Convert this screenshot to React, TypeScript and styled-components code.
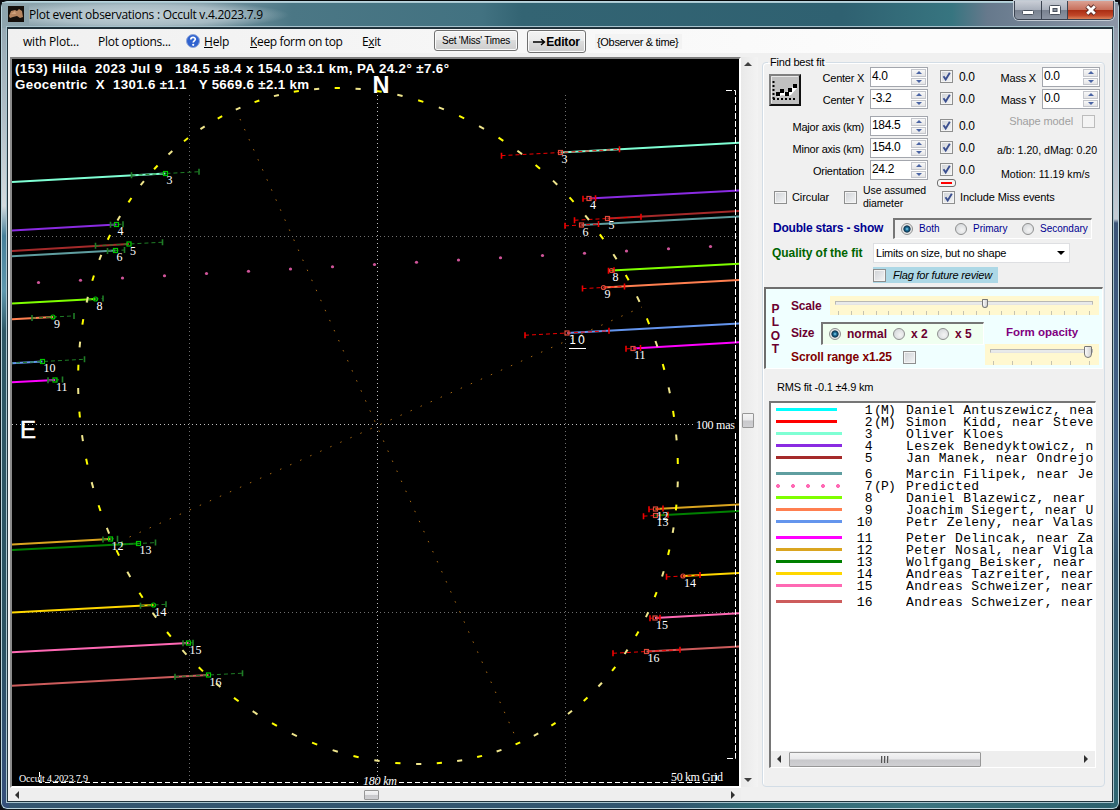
import { Fragment } from 'react';
import styled, { createGlobalStyle, css } from 'styled-components';

const GlobalStyle = createGlobalStyle`
  * {
    box-sizing: border-box;
  }

  body {
    margin: 0;
    background: #0b0b10;
    font-family: 'Liberation Sans', Arial, sans-serif;
    font-size: 11px;
    color: #000;
    overflow: hidden;
  }
`;

/* ---------- window ---------- */

const Window = styled.div`
  width: 1120px;
  height: 810px;
  padding: 1px 7px 8px 7px;
  display: flex;
  flex-direction: column;
  border: 1px solid #10181c;
  border-top-color: #05080a;
  border-radius: 7px;
  background:
    linear-gradient(180deg, #8fa3ae 0, #b3c0c8 120px, #d4dade 205px, #47809a 235px, #5f98ae 290px, #2f5866 330px, #2a5262 640px, #35507a 790px) left / 8px 100% no-repeat,
    linear-gradient(180deg, #8a93a5 0, #a4acb8 90px, #c5ccd4 218px, #3c5578 222px, #44658a 480px, #33566e 560px, #2f6672 100%) right / 8px 100% no-repeat,
    linear-gradient(90deg, #34556f 0, #31556f 60%, #2f6672 66%, #3c7480 82%, #2c5f6c 100%) bottom / 100% 9px no-repeat,
    #35606e;
  box-shadow: inset 0 0 0 1px #b9d3dc;
`;

const TitleBar = styled.div`
  height: 26px;
  flex: none;
  margin: 0 -6px;
  padding-left: 6px;
  display: flex;
  align-items: flex-start;
  background: linear-gradient(90deg, #8ea5ae 0, #7d99a4 200px, #4b7785 290px, #427281 480px, #336473 520px, #2f6171 840px, #377580 950px, #66798c 985px, #8b95a6 1110px);
  border-top: 1px solid #a9c8d1;
`;

const TitleIcon = styled.svg`
  margin: 3px 5px 0 0;
  width: 16px;
  height: 16px;
`;

const Title = styled.div`
  font: 12px 'Open Sans', 'Noto Sans', sans-serif;
  letter-spacing: -0.27px;
  line-height: 24px;
  height: 24px;
  padding-right: 8px;
  flex: 1;
  background: radial-gradient(ellipse 150px 15px at 110px 12px, rgba(215, 226, 231, 0.75) 0, rgba(195, 210, 217, 0.6) 65%, transparent 100%);
`;

const CaptionButtons = styled.div`
  display: flex;
  height: 19px;
  margin: -2px 4px 0 0;
  border: 1px solid #3a4350;
  border-top: 0;
  border-radius: 0 0 5px 5px;
  overflow: hidden;
  box-shadow: 0 0 0 1px #c3cbd4;
`;

const CaptionButton = styled.div<{ $w: number; $close?: boolean }>`
  width: ${({ $w }) => $w}px;
  display: flex;
  align-items: center;
  justify-content: center;
  border-right: ${({ $close }) => ($close ? 0 : '1px solid #3a4350')};
  background: ${({ $close }) =>
    $close
      ? 'linear-gradient(#dba193 0, #c8705c 48%, #a82c12 50%, #c04628 80%, #d98259 100%)'
      : 'linear-gradient(#c9ced6 0, #a9b0bc 48%, #78818f 50%, #8c95a3 100%)'};
`;

const Client = styled.div`
  flex: 1;
  display: flex;
  flex-direction: column;
  background: #f0f0f0;
  border-top: 1px solid #1f3039;
  box-shadow: 0 0 0 1px #22343d, 0 0 0 2px #a8c4ce;
`;

/* ---------- menu ---------- */

const MenuBar = styled.div`
  height: 24px;
  flex: none;
  display: flex;
  align-items: center;
  padding-left: 15px;
  background: linear-gradient(90deg, #f0f0f0 0, #f6f6f6 40%, #fcfcfc 80%);
  font: 12px 'Open Sans', 'Noto Sans', sans-serif;
`;

const MenuItem = styled.div<{ $w: number; $spacing?: number }>`
  width: ${({ $w }) => $w}px;
  flex: none;
  white-space: nowrap;
  letter-spacing: ${({ $spacing = -0.2 }) => $spacing}px;
`;

const HelpIcon = styled.svg`
  width: 14px;
  height: 14px;
  margin-right: 4px;
`;

const PushButton = styled.div<{ $w: number; $strong?: boolean }>`
  width: ${({ $w }) => $w}px;
  height: ${({ $strong }) => ($strong ? 23 : 21)}px;
  margin: ${({ $strong }) => ($strong ? '1px' : '-1px')} 9px 0 0;
  display: flex;
  align-items: center;
  justify-content: center;
  white-space: nowrap;
  border: 1px solid #707070;
  border-radius: 3px;
  background: linear-gradient(#f3f3f3 0, #ebebeb 49%, #dcdcdc 50%, #cdcdcd 100%);
  box-shadow: inset 0 0 0 1px #fbfbfb;
  font: ${({ $strong }) => ($strong ? 'bold 12px' : '10px')} 'Liberation Sans', Arial, sans-serif;
  letter-spacing: ${({ $strong }) => ($strong ? -0.2 : -0.22)}px;
`;

const Hint = styled.div`
  padding: 2px 4px 0 2px;
  background: #f3f3f3;
  font: 11px/13px 'Liberation Sans', Arial, sans-serif;
  letter-spacing: -0.32px;
`;

/* ---------- plot ---------- */

const Main = styled.div`
  flex: 1;
  display: flex;
  padding: 4px 0 0 2px;
`;

const PlotColumn = styled.div`
  width: 731px;
  flex: none;
`;

const PlotFrame = styled.div`
  border: 2px solid #fff;
  border-top-color: #7c7c7c;
  border-left-color: #8a8a8a;
  height: 731px;
`;

const Plot = styled.svg`
  display: block;
  width: 727px;
  height: 727px;
  background: #000;
`;

const ScrollH = styled.div<{ $h: number }>`
  height: ${({ $h }) => $h}px;
  display: flex;
  align-items: center;
  background: #eeeeee;
`;

const ScrollV = styled.div`
  width: 17px;
  height: 730px;
  flex: none;
  display: flex;
  flex-direction: column;
  align-items: center;
  padding: 5px 4px 5px 0;
  background: linear-gradient(90deg, #e9e9e9, #f3f3f3);
`;

const Spacer = styled.div<{ $size: number }>`
  flex: 0 0 ${({ $size }) => $size}px;
`;

const Thumb = styled.div<{ $w: number; $h: number }>`
  width: ${({ $w }) => $w}px;
  height: ${({ $h }) => $h}px;
  flex: none;
  display: flex;
  align-items: center;
  justify-content: center;
  gap: 1px;
  border: 1px solid #979797;
  border-radius: 1px;
  background: linear-gradient(#f4f4f4 0, #e9e9eb 48%, #c8c8cb 52%, #d0d0d3 100%);
`;

const Grip = styled.i`
  width: 2px;
  height: 7px;
  border-left: 1px solid #555;
  border-right: 1px solid #bbb;
`;

const Arrow = styled.i<{ $dir: 'up' | 'down' | 'left' | 'right' }>`
  flex: none;
  width: 0;
  height: 0;
  border: 4px solid transparent;
  ${({ $dir }) => $dir === 'up' && css`border-top: 0; border-bottom-color: #404040;`}
  ${({ $dir }) => $dir === 'down' && css`border-bottom: 0; border-top-color: #404040;`}
  ${({ $dir }) => $dir === 'left' && css`border-left: 0; border-right-color: #303030;`}
  ${({ $dir }) => $dir === 'right' && css`border-right: 0; border-left-color: #303030;`}
`;

/* ---------- side panel ---------- */

const Side = styled.fieldset`
  margin: 0 0 0 4px;
  padding: 0;
  width: 343px;
  height: 730px;
  min-width: 0;
  border: 1px solid #d3dde6;
  border-radius: 4px;
  box-shadow: inset 1px 1px 0 #fff;
`;

const Legend = styled.legend`
  margin-left: 5px;
  padding: 0 2px;
  height: 11px;
  line-height: 11px;
  letter-spacing: -0.2px;
`;

const FitGrid = styled.div`
  height: 116px;
  margin-top: -1px;
  padding-left: 7px;
  display: grid;
  grid-template-columns: 32px 62px 6px 58px 12px 13px 6px 20px 129px;
  grid-template-rows: 22px 27px 22px 22px 22px;
`;

const FitButton = styled.svg`
  grid-row: 1 / 3;
  grid-column: 1;
  width: 32px;
  height: 32px;
  margin: 7px 0 0 -1px;
`;

const FitLabel = styled.div`
  grid-column: 1 / 3;
  justify-self: end;
  white-space: nowrap;
  line-height: 23px;
  height: 20px;
  letter-spacing: -0.25px;
`;

const SpinBox = styled.div`
  width: 58px;
  height: 20px;
  display: flex;
  justify-content: space-between;
  padding: 0 0 0 1px;
  border: 1px solid #a3a6ad;
  background: #fff;
  font-size: 12px;
  line-height: 16px;
  letter-spacing: -0.35px;
`;

const SpinArrows = styled.div`
  width: 15px;
  margin: 1px;
  display: flex;
  flex-direction: column;
  gap: 1px;
`;

const SpinArrow = styled.div<{ $up?: boolean }>`
  flex: 1;
  display: flex;
  align-items: center;
  justify-content: center;
  border: 1px solid #c4c6cc;
  background: linear-gradient(#f8f8f8, #e4e4e6);

  &::after {
    content: '';
    border: 3px solid transparent;
    ${({ $up }) =>
      $up ? 'border-top: 0; border-bottom-color: #4a64a4;' : 'border-bottom: 0; border-top-color: #4a64a4;'}
  }
`;

const CheckFrame = styled.span<{ $dim?: boolean }>`
  width: 13px;
  height: 13px;
  flex: none;
  display: inline-flex;
  border: 1px solid ${({ $dim }) => ($dim ? '#bcbcbc' : '#8e8f8f')};
  background: ${({ $dim }) => ($dim ? '#f4f4f4' : 'linear-gradient(135deg, #cfd2d6, #f4f5f6)')};
  box-shadow: inset 0 0 0 1px #f4f4f4;
`;

const CheckCell = styled.div`
  grid-column: 6;
  padding-top: 3px;
  line-height: 0;
`;

const CheckValue = styled.div`
  grid-column: 8;
  font-size: 12px;
  line-height: 20px;
  letter-spacing: -0.4px;
`;

const MassCell = styled.div`
  grid-column: 9;
  display: flex;
  gap: 6px;
  justify-content: flex-end;
  padding-right: 8px;
  white-space: nowrap;
  line-height: 23px;
  letter-spacing: -0.2px;
`;

const ShapeModel = styled.div`
  grid-column: 9;
  display: flex;
  gap: 9px;
  justify-content: flex-end;
  padding-right: 13px;
  white-space: nowrap;
  letter-spacing: -0.1px;
  line-height: 12px;
  color: #a0a0a0;
  margin-top: -1px;
`;

const FitNote = styled.div<{ $indent: number; $drop: number }>`
  grid-column: 9;
  white-space: nowrap;
  font-size: 10.6px;
  padding-left: ${({ $indent }) => $indent}px;
  padding-top: ${({ $drop }) => $drop}px;
`;

const MissBadge = styled.div`
  width: 19px;
  height: 8px;
  margin: -4px 0 0 174px;
  padding: 2px 3px;
  border: 1px solid #707070;
  border-radius: 3px;
  background: #f4f4f4;

  &::after {
    content: '';
    display: block;
    height: 2px;
    background: #f00;
  }
`;

const OptionRow = styled.div`
  height: 26px;
  margin-top: -3px;
  padding-left: 11px;
  display: flex;
  align-items: center;
`;

const OptionText = styled.div<{ $w: number }>`
  width: ${({ $w }) => $w}px;
  padding-left: 5px;
  white-space: pre;
  line-height: 13px;
  letter-spacing: -0.1px;
`;

const SmallOption = styled(OptionText)`
  padding-left: 6px;
  font-size: 10.5px;
`;

const StarsRow = styled.div`
  height: 20px;
  margin-top: 8px;
  padding-left: 10px;
  display: flex;
  align-items: center;
`;

const StrongLabel = styled.div<{ $w: number; $color: string; $spacing?: number }>`
  width: ${({ $w }) => $w}px;
  flex: none;
  white-space: nowrap;
  font-size: 12px;
  font-weight: bold;
  color: ${({ $color }) => $color};
  letter-spacing: ${({ $spacing = -0.2 }) => $spacing}px;
`;

const RadioPanel = styled.div<{ $w: number; $h: number; $fill: string }>`
  width: ${({ $w }) => $w}px;
  height: ${({ $h }) => $h}px;
  flex: none;
  display: flex;
  align-items: center;
  padding-left: 6px;
  border: 2px solid #fff;
  border-width: 2px 1px 1px 2px;
  border-top-color: #767676;
  border-left-color: #767676;
  background: ${({ $fill }) => $fill};
`;

const RadioDot = styled.i<{ $on?: boolean }>`
  width: 12px;
  height: 12px;
  flex: none;
  border: 1px solid #8e8f8f;
  border-radius: 50%;
  background: ${({ $on }) =>
    $on
      ? 'radial-gradient(circle at 5px 5px, #8fdcf5 0, #1f6f99 1.6px, #0c3049 3.2px, #e8e8e8 4px)'
      : 'radial-gradient(circle at 6px 6px, #f4f4f4 0, #d5d8db 80%)'};
`;

const RadioText = styled.span<{ $w: number; $strong?: boolean }>`
  width: ${({ $w }) => $w}px;
  flex: none;
  padding-left: 6px;
  white-space: nowrap;
  font-size: ${({ $strong }) => ($strong ? 12 : 10)}px;
  font-weight: ${({ $strong }) => ($strong ? 'bold' : 'normal')};
  color: ${({ $strong }) => ($strong ? '#6b0030' : '#000090')};
`;

const QualityRow = styled.div`
  height: 20px;
  margin-top: 5px;
  padding-left: 9px;
  display: flex;
  align-items: center;
`;

const Combo = styled.div`
  width: 197px;
  height: 20px;
  display: flex;
  align-items: center;
  justify-content: space-between;
  padding: 0 4px 0 2px;
  border: 1px solid #dedfe2;
  background: #fff;
  letter-spacing: -0.22px;
  white-space: nowrap;

  &::after {
    content: '';
    border: 4px solid transparent;
    border-bottom: 0;
    border-top-color: #000;
  }
`;

const ReviewFlag = styled.div`
  width: 125px;
  height: 16px;
  margin: 4px 0 0 110px;
  display: flex;
  align-items: center;
  gap: 7px;
  background: #add8e6;
  font-style: italic;
  letter-spacing: -0.2px;
  white-space: nowrap;
`;

const PlotPanel = styled.div`
  width: 339px;
  height: 82px;
  margin: 4px 0 0 1px;
  display: flex;
  border: 2px solid #fff;
  border-top-color: #6e6e6e;
  border-left-color: #6e6e6e;
  border-width: 2px 1px 1px 2px;
  background: #f0ffff;
`;

const PlotWord = styled.div`
  width: 25px;
  padding: 14px 8px 0 2px;
  text-align: center;
  font-size: 12px;
  font-weight: bold;
  line-height: 13.3px;
  color: #6b0030;
`;

const PlotSettings = styled.div`
  flex: 1;
`;

const ScaleRow = styled.div`
  height: 19px;
  margin-top: 7px;
  display: flex;
  align-items: center;
`;

const SizeArea = styled.div`
  display: flex;
  padding-top: 6px;
`;

const SizeColumn = styled.div<{ $w: number }>`
  width: ${({ $w }) => $w}px;
  flex: none;
`;

const SizeRow = styled.div`
  display: flex;
  align-items: center;
  height: 24px;
`;

const OpacityTitle = styled.div`
  padding: 5px 0 0 21px;
  height: 23px;
  font-size: 11.5px;
  font-weight: bold;
  color: #800080;
  white-space: nowrap;
`;

const SliderBox = styled.div<{ $w: number; $h: number }>`
  position: relative;
  width: ${({ $w }) => $w}px;
  height: ${({ $h }) => $h}px;
  flex: none;
  padding: 5px 6px 0 5px;
  background: #fff8d0;
`;

const Track = styled.div`
  height: 4px;
  border: 1px solid #b8b8b4;
  border-bottom-color: #e4e4e4;
  background: #e8eaea;
`;

const Ticks = styled.div<{ $gap: number }>`
  display: flex;
  justify-content: space-between;
  padding: 0 3px;
  margin-top: ${({ $gap }) => $gap}px;
`;

const Tick = styled.i`
  width: 1px;
  height: 4px;
  background: #c6c3b0;
`;

const Knob = styled.div<{ $x: number; $big?: boolean }>`
  position: absolute;
  left: ${({ $x }) => $x}px;
  top: ${({ $big }) => ($big ? 2 : 3)}px;
  width: ${({ $big }) => ($big ? 8 : 6)}px;
  height: ${({ $big }) => ($big ? 12 : 9)}px;
  border: 1px solid #777;
  border-radius: 1px 1px 4px 4px;
  background: linear-gradient(90deg, #fafafa, #d2d2d2);
`;

const RmsText = styled.div`
  margin: 11px 0 0 14px;
  height: 14px;
  line-height: 14px;
  letter-spacing: -0.2px;
`;

const ObserverBox = styled.div`
  width: 327px;
  height: 367px;
  margin: 7px 0 0 6px;
  display: flex;
  flex-direction: column;
  overflow: hidden;
  border: 1px solid #fff;
  border-top: 2px solid #767676;
  border-left: 2px solid #767676;
  background: #fff;
`;

const ObserverList = styled.div`
  flex: 1;
  padding: 1px 0 0 5px;
`;

const ObserverRow = styled.div<{ $gap?: boolean }>`
  height: 12px;
  margin-top: ${({ $gap }) => ($gap ? 4 : 0)}px;
  display: grid;
  grid-template-columns: 66px 31px 33px 187px;
  font: 13px/14px 'Liberation Mono', 'Courier New', monospace;
  letter-spacing: 0.36px;
  white-space: pre;
`;

const Swatch = styled.i<{ $w: number; $color: string; $dots?: boolean }>`
  width: ${({ $w }) => $w}px;
  height: ${({ $dots }) => ($dots ? 4 : 3)}px;
  margin-top: 4px;
  background: ${({ $color, $dots }) =>
    $dots ? `radial-gradient(circle at 2px 2px, ${$color} 1.7px, transparent 2.2px) 0 0 / 15px 4px repeat-x` : $color};
`;

const ObserverNo = styled.span`
  text-align: right;
`;

const ObserverKind = styled.span`
  padding-left: 1px;
  letter-spacing: -0.8px;
`;

const ObserverName = styled.span`
  overflow: hidden;
  height: 16px;
`;

/* ---------- data ---------- */

type Chord = {
  no: number;
  color: string;
  // edgeY, x, y, error bar from, error bar to
  d: number[];
  r: number[];
  dot?: boolean;
};

const chords: Chord[] = [
  { no: 3, color: '#7fffd4', d: [182, 165.5, 173.5, 131.5, 199], r: [142.8, 560.5, 152.5, 501.5, 619.5] },
  { no: 4, color: '#8a2be2', d: [230.5, 116.5, 224.5, 110.5, 123], r: [190.5, 589, 198.5, 583, 595.5] },
  { no: 5, color: '#a52a2a', d: [251, 129, 244, 95.5, 162.5], r: [211, 607.5, 218.5, 574.5, 641] },
  { no: 6, color: '#5f9ea0', d: [256.3, 115.5, 250.5, 107.5, 124.5], r: [216.5, 581.5, 225, 565, 598.5] },
  { no: 8, color: '#7fff00', d: [303.5, 95.5, 299, 87.5, 103], r: [263.7, 611.5, 270.5, 608.5, 614], dot: true },
  { no: 9, color: '#ff7f50', d: [319.2, 53, 317, 32, 74], r: [280, 603.5, 287.5, 582.5, 624.5], dot: true },
  { no: 10, color: '#6495ed', d: [363.3, 42.5, 361.5, 2, 84.5], r: [323.5, 567, 333, 525, 609] },
  { no: 11, color: '#ff00ff', d: [382.3, 55, 380, 48, 62.5], r: [342.3, 633, 348.5, 626, 640.5] },
  { no: 12, color: '#daa520', d: [544.5, 110.5, 539, 103, 117.5], r: [504.5, 655.5, 509, 649, 663] },
  { no: 13, color: '#008000', d: [550, 138.5, 543.5, 122, 155.5], r: [511, 655.5, 515.5, 643.5, 668] },
  { no: 14, color: '#ffd700', d: [612.5, 153.5, 605, 140.5, 166], r: [573, 683, 576, 666.5, 700], dot: true },
  { no: 15, color: '#ff69b4', d: [652.2, 188.5, 643, 183, 193], r: [613.2, 655, 618, 650, 660] },
  { no: 16, color: '#cd5c5c', d: [685.8, 208.5, 675, 175, 242.5], r: [646.5, 646.5, 651.5, 613, 680] },
];

const observers = [
  { no: 1, kind: '(M)', name: 'Daniel Antuszewicz, nea', color: '#00ffff', w: 61 },
  { no: 2, kind: '(M)', name: 'Simon  Kidd, near Steve', color: '#ff0000', w: 61 },
  { no: 3, name: 'Oliver Kloes', color: '#7fffd4' },
  { no: 4, name: 'Leszek Benedyktowicz, n', color: '#8a2be2' },
  { no: 5, name: 'Jan Manek, near Ondrejo', color: '#a52a2a' },
  { no: 6, name: 'Marcin Filipek, near Je', color: '#5f9ea0' },
  { no: 7, kind: '(P)', name: 'Predicted', color: '#ff69b4' },
  { no: 8, name: 'Daniel Blazewicz, near', color: '#7fff00' },
  { no: 9, name: 'Joachim Siegert, near U', color: '#ff7f50' },
  { no: 10, name: 'Petr Zeleny, near Valas', color: '#6495ed' },
  { no: 11, name: 'Peter Delincak, near Za', color: '#ff00ff' },
  { no: 12, name: 'Peter Nosal, near Vigla', color: '#daa520' },
  { no: 13, name: 'Wolfgang Beisker, near', color: '#008000' },
  { no: 14, name: 'Andreas Tazreiter, near', color: '#ffd700' },
  { no: 15, name: 'Andreas Schweizer, near', color: '#ff69b4' },
  { no: 16, name: 'Andreas Schweizer, near', color: '#cd5c5c' },
];

const fitRows = [
  { label: 'Center X', value: '4.0' },
  { label: 'Center Y', value: '-3.2' },
  { label: 'Major axis (km)', value: '184.5' },
  { label: 'Minor axis (km)', value: '154.0' },
  { label: 'Orientation', value: '24.2' },
];

const CENTER = { x: 378, y: 426 };
const PA = (24.2 * Math.PI) / 180;
const SEMI_MAJOR = 346.9;
const SEMI_MINOR = 289.5;

const onEllipse = (deg: number) => {
  const t = (deg * Math.PI) / 180;
  const a = SEMI_MAJOR * Math.cos(t);
  const b = SEMI_MINOR * Math.sin(t);
  return {
    x: CENTER.x - a * Math.sin(PA) + b * Math.cos(PA),
    y: CENTER.y - a * Math.cos(PA) - b * Math.sin(PA),
  };
};

const EllipseDashes = () => (
  <g strokeWidth={2}>
    {Array.from({ length: 90 }, (_, i) => {
      const from = onEllipse(i * 4);
      const to = onEllipse(i * 4 + 1);
      return (
        <line key={i} x1={from.x} y1={from.y} x2={to.x} y2={to.y} stroke={i % 2 ? '#ffff00' : '#f0e68c'} />
      );
    })}
  </g>
);

const ErrorBar = ({ side, color }: { side: number[]; color: string }) => {
  const [, x, y, from, to] = side;
  const slope = -0.053;
  const y1 = y + (from - x) * slope;
  const y2 = y + (to - x) * slope;
  return (
    <g stroke={color}>
      <line x1={from} y1={y1} x2={to} y2={y2} strokeDasharray='4 3' />
      <path d={`M${from} ${y1 - 3}v6M${to} ${y2 - 3}v6`} strokeWidth={1.6} />
    </g>
  );
};

const Marker = ({ x, y, color, round }: { x: number; y: number; color: string; round?: boolean }) =>
  round ? (
    <circle cx={x} cy={y} r={2} fill='none' stroke={color} strokeWidth={1.2} />
  ) : (
    <rect x={x - 2} y={y - 2} width={4} height={4} fill='none' stroke={color} strokeWidth={1.2} />
  );

const ChordLines = () => (
  <>
    {chords.map(({ no, color, d, r, dot }) => (
      <Fragment key={no}>
        <line x1={12} y1={d[0]} x2={d[1]} y2={d[2]} stroke={color} strokeWidth={2} />
        <line x1={r[1]} y1={r[2]} x2={740} y2={r[0]} stroke={color} strokeWidth={2} />
        <ErrorBar side={d} color='#1f7d26' />
        <ErrorBar side={r} color='#f00000' />
        <Marker x={d[1]} y={d[2]} color='#00c800' round={dot} />
        <Marker x={r[1]} y={r[2]} color='#e04a3a' round={dot} />
      </Fragment>
    ))}
    <g fill='#fff' fontFamily="'Liberation Serif', serif" fontSize={12}>
      {chords.map(({ no, d, r }) => (
        <Fragment key={no}>
          <text x={d[1] + 1} y={d[2] + 10.5}>{no}</text>
          {no !== 10 && <text x={r[1] + 1} y={r[2] + 10.5}>{no}</text>}
        </Fragment>
      ))}
    </g>
    <text x={569} y={344} fill='#fff' fontFamily="'DejaVu Sans', sans-serif" fontSize={11.5} textLength={16}>10</text>
    <path d='M569 348.5h17' stroke='#fff' />
  </>
);

const OccultationPlot = () => (
  <Plot viewBox='12 59 727 727'>
    <g stroke='#6e6e6e' strokeDasharray='1 3'>
      <path d='M189.5 95V786M565.5 95V786' />
      <path d='M12 236.5H739M12 612.5H739' />
      <path d='M377.5 95V786M12 424.5H694' stroke='#c0c0c0' />
    </g>
    <g stroke='#a86a14' strokeDasharray='1.5 9.5'>
      <path d='M240 119L516 738' />
      <path d='M129.500 537L642 307' />
    </g>
    <ChordLines />
    {Array.from({ length: 17 }, (_, i) => (
      <circle key={i} cx={38.5 + i * 42} cy={282.5 - i * 2.25} r={1.6} fill='#d0559a' />
    ))}
    <EllipseDashes />
    <g stroke='#fff' fill='none'>
      <path d='M726 90.500H735.500V419M735.500 433V758.500H726' strokeDasharray='6 2' />
      <path d='M39.500 772V782.500H358M399 782.500H716.500V772' strokeDasharray='5 3' />
    </g>
    <g fill='#fff' fontFamily="'Liberation Sans', sans-serif" fontWeight='bold'>
      <text x={15} y={73} fontSize={13.3} textLength={434} xmlSpace='preserve' style={{ whiteSpace: 'pre' }}>
        {'(153) Hilda  2023 Jul 9   184.5 ±8.4 x 154.0 ±3.1 km, PA 24.2° ±7.6°'}
      </text>
      <text x={15} y={89} fontSize={13.3} textLength={294} xmlSpace='preserve' style={{ whiteSpace: 'pre' }}>
        {'Geocentric  X  1301.6 ±1.1   Y 5669.6 ±2.1 km'}
      </text>
      <text x={372.500} y={93} fontSize={23.500} textLength={17}>N</text>
      <text x={20} y={438} fontSize={24} fontWeight='normal' stroke='#fff' strokeWidth={0.5}>E</text>
    </g>
    <g fill='#fff' fontFamily="'Liberation Serif', serif">
      <text x={696} y={429} fontSize={12} textLength={39}>100 mas</text>
      <text x={363} y={785} fontSize={12} fontStyle='italic' textLength={34}>180 km</text>
      <text x={19} y={782} fontSize={10} textLength={69}>Occult 4.2023.7.9</text>
      <text x={671} y={781} fontSize={12} textLength={52}>50 km Grid</text>
    </g>
  </Plot>
);

const Check = ({ on, dim }: { on?: boolean; dim?: boolean }) => (
  <CheckFrame $dim={dim}>
    {on && (
      <svg width='11' height='11' viewBox='0 0 11 11'>
        <path d='M2.500 5.200L4.700 8.500L8.800 1.800' fill='none' stroke='#3b4f8f' strokeWidth='1.9' />
      </svg>
    )}
  </CheckFrame>
);

const Spin = ({ value }: { value: string }) => (
  <SpinBox>
    {value}
    <SpinArrows>
      <SpinArrow $up />
      <SpinArrow />
    </SpinArrows>
  </SpinBox>
);

const Slider = ({ w, h, ticks, knob, big }: { w: number; h: number; ticks: number; knob: number; big?: boolean }) => (
  <SliderBox $w={w} $h={h}>
    <Track />
    <Ticks $gap={big ? 8 : 6}>
      {Array.from({ length: ticks }, (_, i) => (
        <Tick key={i} />
      ))}
    </Ticks>
    <Knob $x={knob} $big={big} />
  </SliderBox>
);

const FitIcon = () => (
  <FitButton viewBox='0 0 32 32'>
    <rect width='32' height='32' fill='#808080' />
    <path d='M32 0V32H0L2 30H30V2z' fill='#111' />
    <rect x='2' y='2' width='28' height='28' fill='#c0c0c0' />
    <path d='M2.500 29V2.500H29' fill='none' stroke='#e8e8e8' />
    <path d='M8 21L13 17L17 19L21 15L26 11H28V14L22 21L18 22L13 21L9 23z' fill='#fff' />
    <path d='M4.500 7V26' stroke='#000' strokeWidth='2' strokeDasharray='2 2' />
    <path d='M4 25H28' stroke='#000' strokeWidth='2' strokeDasharray='2 2' />
    <path d='M7 18h4v4h-4zM11 15h4v4h-4zM16 18h4v4h-4zM19 14h4v4h-4zM24 10h4v4h-4z' fill='#000' />
  </FitButton>
);

const PlotControls = () => (
  <PlotPanel>
    <PlotWord>
      P<br />L<br />O<br />T
    </PlotWord>
    <PlotSettings>
      <ScaleRow>
        <StrongLabel $w={39} $color='#6b0030'>Scale</StrongLabel>
        <Slider w={269} h={19} ticks={21} knob={152} />
      </ScaleRow>
      <SizeArea>
        <SizeColumn $w={194}>
          <SizeRow>
            <StrongLabel $w={30} $color='#6b0030'>Size</StrongLabel>
            <RadioPanel $w={163} $h={23} $fill='#f0fff0'>
              <RadioDot $on />
              <RadioText $w={52} $strong>normal</RadioText>
              <RadioDot />
              <RadioText $w={32} $strong>x 2</RadioText>
              <RadioDot />
              <RadioText $w={30} $strong>x 5</RadioText>
            </RadioPanel>
          </SizeRow>
          <SizeRow>
            <StrongLabel $w={112} $color='#800000' $spacing={-0.1}>Scroll range x1.25</StrongLabel>
            <Check />
          </SizeRow>
        </SizeColumn>
        <SizeColumn $w={115}>
          <OpacityTitle>Form opacity</OpacityTitle>
          <Slider w={114} h={21} ticks={6} knob={99} big />
        </SizeColumn>
      </SizeArea>
    </PlotSettings>
  </PlotPanel>
);

const FitPanel = () => (
  <Side>
    <Legend>Find best fit</Legend>
    <FitGrid>
      <FitIcon />
      {fitRows.map(({ label, value }, i) => (
        <Fragment key={label}>
          <FitLabel style={{ gridRow: i + 1 }}>{label}</FitLabel>
          <div style={{ gridRow: i + 1, gridColumn: 4 }}>
            <Spin value={value} />
          </div>
          <CheckCell style={{ gridRow: i + 1 }}>
            <Check on />
          </CheckCell>
          <CheckValue style={{ gridRow: i + 1 }}>0.0</CheckValue>
        </Fragment>
      ))}
      <MassCell style={{ gridRow: 1 }}>Mass X<Spin value='0.0' /></MassCell>
      <MassCell style={{ gridRow: 2 }}>Mass Y<Spin value='0.0' /></MassCell>
      <ShapeModel style={{ gridRow: 3 }}>Shape model<Check dim /></ShapeModel>
      <FitNote style={{ gridRow: 4 }} $indent={18} $drop={6}>a/b: 1.20, dMag: 0.20</FitNote>
      <FitNote style={{ gridRow: 5 }} $indent={22} $drop={8}>Motion: 11.19 km/s</FitNote>
    </FitGrid>
    <MissBadge />
    <OptionRow>
      <Check />
      <OptionText $w={57}>Circular</OptionText>
      <Check />
      <SmallOption $w={85}>{'Use assumed\ndiameter'}</SmallOption>
      <Check on />
      <OptionText $w={110}>Include Miss events</OptionText>
    </OptionRow>
    <StarsRow>
      <StrongLabel $w={120} $color='#000090'>Double stars - show</StrongLabel>
      <RadioPanel $w={199} $h={21} $fill='#f0f0f0'>
        <RadioDot $on />
        <RadioText $w={42}>Both</RadioText>
        <RadioDot />
        <RadioText $w={55}>Primary</RadioText>
        <RadioDot />
        <RadioText $w={54}>Secondary</RadioText>
      </RadioPanel>
    </StarsRow>
    <QualityRow>
      <StrongLabel $w={101} $color='#006400' $spacing={-0.05}>Quality of the fit</StrongLabel>
      <Combo>Limits on size, but no shape</Combo>
    </QualityRow>
    <ReviewFlag><Check />Flag for future review</ReviewFlag>
    <PlotControls />
    <RmsText>RMS fit -0.1 ±4.9 km</RmsText>
    <ObserverBox>
      <ObserverList>
        {observers.map(({ no, kind, name, color, w = 66 }) => (
          <ObserverRow key={no} $gap={no > 1 && no % 5 === 1}>
            <Swatch $w={w} $color={color} $dots={kind === '(P)'} />
            <ObserverNo>{no}</ObserverNo>
            <ObserverKind>{kind}</ObserverKind>
            <ObserverName>{name}</ObserverName>
          </ObserverRow>
        ))}
      </ObserverList>
      <ScrollH $h={16}>
        <Spacer $size={6} />
        <Arrow $dir='left' />
        <Spacer $size={8} />
        <Thumb $w={192} $h={15}><Grip /><Grip /><Grip /></Thumb>
        <Spacer $size={103} />
        <Arrow $dir='right' />
      </ScrollH>
    </ObserverBox>
  </Side>
);

const App = () => (
  <>
    <GlobalStyle />
    <Window>
      <TitleBar>
        <TitleIcon viewBox='0 0 16 16'>
          <rect width='16' height='16' fill='#15100c' />
          <path d='M1 10L3 5L7 4L9 5L11 3L14 5L15 11L12 12L9 10L5 11L2 12z' fill='#b58560' />
          <path d='M3 8L7 5L8 8z' fill='#cfa27c' />
        </TitleIcon>
        <Title>Plot event observations : Occult v.4.2023.7.9</Title>
        <CaptionButtons>
          <CaptionButton $w={27}>
            <svg width='14' height='12' viewBox='0 0 14 12'>
              <rect x='1.500' y='6.500' width='11' height='4' rx='1' fill='#fff' stroke='#4a525e' />
            </svg>
          </CaptionButton>
          <CaptionButton $w={26}>
            <svg width='14' height='12' viewBox='0 0 14 12'>
              <rect x='1.500' y='1.500' width='11' height='9' rx='1' fill='#fff' stroke='#4a525e' />
              <rect x='5' y='4.500' width='4' height='3' fill='#8a93a0' stroke='#4a525e' />
            </svg>
          </CaptionButton>
          <CaptionButton $w={45} $close>
            <svg width='14' height='12' viewBox='0 0 14 12'>
              <path d='M3 2L11 10M11 2L3 10' stroke='#5a2a24' strokeWidth='4.600' />
              <path d='M3.200 2.200L10.800 9.800M10.800 2.200L3.200 9.800' stroke='#fff' strokeWidth='2.800' />
            </svg>
          </CaptionButton>
        </CaptionButtons>
      </TitleBar>
      <Client>
        <MenuBar>
          <MenuItem $w={75}>with Plot...</MenuItem>
          <MenuItem $w={88} $spacing={-0.25}>Plot options...</MenuItem>
          <HelpIcon viewBox='0 0 14 14'>
            <circle cx='7' cy='7' r='6.500' fill='#2f62cf' stroke='#8fa6d8' />
            <path d='M4.800 5.400C4.800 2.600 9.400 2.700 9.300 5.300C9.200 6.800 7.200 6.900 7.200 8.600' fill='none' stroke='#fff' strokeWidth='1.700' />
            <circle cx='7.200' cy='10.800' r='1.100' fill='#fff' />
          </HelpIcon>
          <MenuItem $w={46}><u>H</u>elp</MenuItem>
          <MenuItem $w={112} $spacing={-0.35}><u>K</u>eep form on top</MenuItem>
          <MenuItem $w={72} $spacing={-0.4}>E<u>x</u>it</MenuItem>
          <PushButton $w={84}>Set 'Miss' Times</PushButton>
          <PushButton $w={59} $strong>
            <svg width='13' height='8' viewBox='0 0 13 8'>
              <path d='M0 4H11M8 1L11.500 4L8 7' fill='none' stroke='#000' strokeWidth='1.400' />
            </svg>
            Editor
          </PushButton>
          <Hint>{'{Observer & time}'}</Hint>
        </MenuBar>
        <Main>
          <PlotColumn>
            <PlotFrame>
              <OccultationPlot />
            </PlotFrame>
            <ScrollH $h={13}>
              <Spacer $size={5} />
              <Arrow $dir='left' />
              <Spacer $size={345} />
              <Thumb $w={15} $h={10} />
              <Spacer $size={352} />
              <Arrow $dir='right' />
            </ScrollH>
          </PlotColumn>
          <ScrollV>
            <Arrow $dir='up' />
            <Spacer $size={347} />
            <Thumb $w={12} $h={15} />
            <Spacer $size={350} />
            <Arrow $dir='down' />
          </ScrollV>
          <FitPanel />
        </Main>
      </Client>
    </Window>
  </>
);

export default App;
